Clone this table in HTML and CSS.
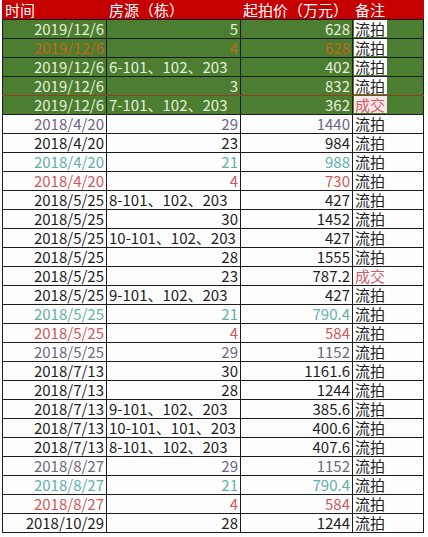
FILE: index.html
```html
<!DOCTYPE html>
<html lang="zh">
<head>
<meta charset="utf-8">
<link rel="stylesheet" href="styles.css">
</head>
<body>
<table class="sheet">
  <colgroup>
    <col class="c-date"><col class="c-house"><col class="c-price"><col class="c-note">
  </colgroup>
  <thead>
    <tr class="head"><th>时间</th><th>房源（栋）</th><th>起拍价（万元）</th><th>备注</th></tr>
  </thead>
  <tbody>
    <tr class="green"><td class="num">2019/12/6</td><td class="num">5</td><td class="num">628</td><td><span class="tag">流拍</span></td></tr>
    <tr class="green orange"><td class="num">2019/12/6</td><td class="num">4</td><td class="num">628</td><td><span class="tag">流拍</span></td></tr>
    <tr class="green"><td class="num">2019/12/6</td><td class="txt">6-101、102、203</td><td class="num">402</td><td><span class="tag">流拍</span></td></tr>
    <tr class="green redline"><td class="num">2019/12/6</td><td class="num">3</td><td class="num">832</td><td><span class="tag">流拍</span></td></tr>
    <tr class="green"><td class="num">2019/12/6</td><td class="txt">7-101、102、203</td><td class="num">362</td><td><span class="tag deal">成交</span></td></tr>
    <tr class="purple"><td class="num">2018/4/20</td><td class="num">29</td><td class="num">1440</td><td>流拍</td></tr>
    <tr><td class="num">2018/4/20</td><td class="num">23</td><td class="num">984</td><td>流拍</td></tr>
    <tr class="teal"><td class="num">2018/4/20</td><td class="num">21</td><td class="num">988</td><td>流拍</td></tr>
    <tr class="red"><td class="num">2018/4/20</td><td class="num">4</td><td class="num">730</td><td>流拍</td></tr>
    <tr><td class="num">2018/5/25</td><td class="txt">8-101、102、203</td><td class="num">427</td><td>流拍</td></tr>
    <tr><td class="num">2018/5/25</td><td class="num">30</td><td class="num">1452</td><td>流拍</td></tr>
    <tr><td class="num">2018/5/25</td><td class="txt">10-101、102、203</td><td class="num">427</td><td>流拍</td></tr>
    <tr><td class="num">2018/5/25</td><td class="num">28</td><td class="num">1555</td><td>流拍</td></tr>
    <tr><td class="num">2018/5/25</td><td class="num">23</td><td class="num">787.2</td><td class="deal-text">成交</td></tr>
    <tr><td class="num">2018/5/25</td><td class="txt">9-101、102、203</td><td class="num">427</td><td>流拍</td></tr>
    <tr class="teal"><td class="num">2018/5/25</td><td class="num">21</td><td class="num">790.4</td><td>流拍</td></tr>
    <tr class="red"><td class="num">2018/5/25</td><td class="num">4</td><td class="num">584</td><td>流拍</td></tr>
    <tr class="purple"><td class="num">2018/5/25</td><td class="num">29</td><td class="num">1152</td><td>流拍</td></tr>
    <tr><td class="num">2018/7/13</td><td class="num">30</td><td class="num">1161.6</td><td>流拍</td></tr>
    <tr><td class="num">2018/7/13</td><td class="num">28</td><td class="num">1244</td><td>流拍</td></tr>
    <tr><td class="num">2018/7/13</td><td class="txt">9-101、102、203</td><td class="num">385.6</td><td>流拍</td></tr>
    <tr><td class="num">2018/7/13</td><td class="txt">10-101、101、203</td><td class="num">400.6</td><td>流拍</td></tr>
    <tr><td class="num">2018/7/13</td><td class="txt">8-101、102、203</td><td class="num">407.6</td><td>流拍</td></tr>
    <tr class="purple"><td class="num">2018/8/27</td><td class="num">29</td><td class="num">1152</td><td>流拍</td></tr>
    <tr class="teal"><td class="num">2018/8/27</td><td class="num">21</td><td class="num">790.4</td><td>流拍</td></tr>
    <tr class="red"><td class="num">2018/8/27</td><td class="num">4</td><td class="num">584</td><td>流拍</td></tr>
    <tr><td class="num">2018/10/29</td><td class="num">28</td><td class="num">1244</td><td>流拍</td></tr>
  </tbody>
</table>
</body>
</html>
```

FILE: styles.css
```css
html, body {
  margin: 0;
  padding: 0;
  background: #fdfdfd;
}

body {
  padding-left: 2px;
  font-family: "Noto Sans CJK SC", "Noto Sans", sans-serif;
  font-size: 15px;
  color: #1e1e1e;
}

.sheet {
  border-collapse: collapse;
  table-layout: fixed;
  width: 421px;
}

.c-date { width: 104px; }
.c-house { width: 134px; }
.c-price { width: 112px; }
.c-note { width: 71px; }

.sheet th,
.sheet td {
  height: 18px;
  padding: 0 2px 0 2px;
  border: 1px solid #1c1c1c;
  line-height: 18px;
  white-space: nowrap;
  overflow: hidden;
  vertical-align: bottom;
}

.sheet th {
  font-weight: 400;
  text-align: left;
  color: #ffffff;
  background: #c60000;
  border-color: #c60000;
  border-bottom-color: #1c1c1c;
}

.sheet th + th {
  border-left-color: #1c1c1c;
}

.num { text-align: right; }
.txt { text-align: left; }

.green td {
  background: #4b7e30;
  color: #e6f0dc;
}

.green.orange td {
  color: #c7631c;
}

.redline td {
  border-bottom-color: #9b3a22;
}

.tag {
  display: inline-block;
  background: #ffffff;
  color: #1e1e1e;
  padding: 0 2px 0 1px;
  margin-left: -1px;
  line-height: 17px;
}

.tag.deal {
  background: #fbe7ea;
  color: #cf5f66;
}

.deal-text {
  color: #cf5f66;
}

.purple td:nth-child(-n+3) { color: #6f6583; }
.teal td:nth-child(-n+3) { color: #5fb1ae; }
.red td:nth-child(-n+3) { color: #cf5a5c; }
```
